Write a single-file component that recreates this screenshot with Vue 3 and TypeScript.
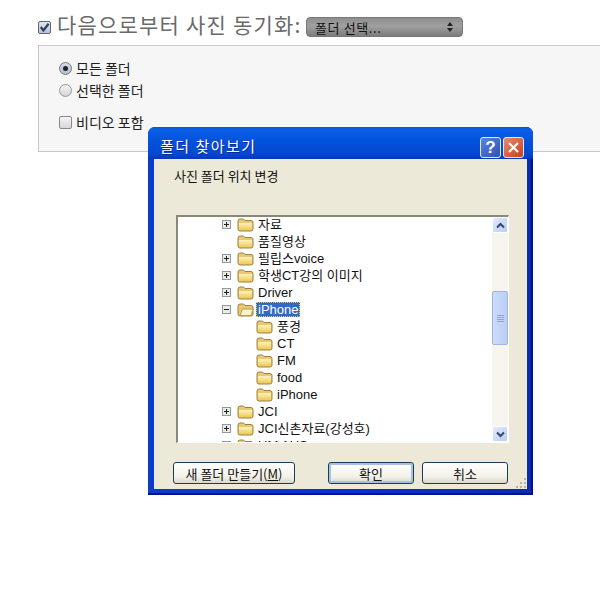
<script setup lang="ts">
interface TreeRow {
  label: string
  depth: number
  expander?: 'plus' | 'minus'
  open?: boolean
}

const rows: TreeRow[] = [
  { label: '자료', depth: 0, expander: 'plus' },
  { label: '품질영상', depth: 0 },
  { label: '필립스voice', depth: 0, expander: 'plus' },
  { label: '학생CT강의 이미지', depth: 0, expander: 'plus' },
  { label: 'Driver', depth: 0, expander: 'plus' },
  { label: 'iPhone', depth: 0, expander: 'minus', open: true },
  { label: '풍경', depth: 1 },
  { label: 'CT', depth: 1 },
  { label: 'FM', depth: 1 },
  { label: 'food', depth: 1 },
  { label: 'iPhone', depth: 1 },
  { label: 'JCI', depth: 0, expander: 'plus' },
  { label: 'JCI신촌자료(강성호)', depth: 0, expander: 'plus' },
  { label: 'HM AUS', depth: 0, expander: 'plus' },
]
</script>

<template>
  <div class="page">
    <header class="sync-head">
      <span class="check checked">
        <svg width="11" height="11" viewBox="0 0 11 11"><path d="M1.8 5 L4.4 8.4 L9.6 1.8" fill="none" stroke="#2f3f5f" stroke-width="2.2" /></svg>
      </span>
      <h1 class="sync-title">다음으로부터 사진 동기화:</h1>
      <div class="select">
        <span>폴더 선택...</span>
        <svg width="8" height="12" viewBox="0 0 8 12"><path d="M4 1 L7 5 H1 Z M4 11 L7 7 H1 Z" fill="#222" /></svg>
      </div>
    </header>

    <section class="panel">
      <label class="opt">
        <span class="radio on"><i></i></span>모든 폴더
      </label>
      <label class="opt">
        <span class="radio"></span>선택한 폴더
      </label>
      <label class="opt video">
        <span class="check"></span>비디오 포함
      </label>
    </section>

    <div class="dialog">
      <div class="titlebar">
        <span class="title-text">폴더 찾아보기</span>
        <span class="cap help">?</span>
        <span class="cap close">
          <svg width="13" height="13" viewBox="0 0 13 13"><path d="M2 2 L11 11 M11 2 L2 11" stroke="#fff" stroke-width="2.2" /></svg>
        </span>
      </div>
      <div class="body">
        <p class="prompt">사진 폴더 위치 변경</p>
        <div class="tree">
          <ul class="rows">
            <li v-for="(r, i) in rows" :key="i" class="row" :class="{ sub: r.depth === 1 }">
              <span v-if="r.depth === 0" class="exp">
                <svg v-if="r.expander" width="9" height="9" viewBox="0 0 9 9">
                  <rect x="0.5" y="0.5" width="8" height="8" fill="#ecebe2" stroke="#8f9aa8" />
                  <path v-if="r.expander === 'plus'" d="M2 4.5 H7 M4.5 2 V7" stroke="#222" />
                  <path v-else d="M2 4.5 H7" stroke="#222" />
                </svg>
              </span>
              <svg class="folder" width="17" height="15" viewBox="0 0 17 15">
                <defs>
                  <linearGradient id="folderFill" x1="0" y1="0" x2="0" y2="1">
                    <stop offset="0" stop-color="#fdf3c0" />
                    <stop offset="1" stop-color="#efca55" />
                  </linearGradient>
                </defs>
                <path d="M1 4 Q1 2 3 2 H6.5 L8 3.5 H14 Q16 3.5 16 5.5 V12 Q16 14 14 14 H3 Q1 14 1 12 Z" fill="#e8c870" stroke="#9c8440" />
                <path v-if="r.open" d="M3 13.5 L5.5 7 H16 L14 13.5 Z" fill="#fdf3c6" stroke="#a89048" stroke-width="0.8" />
                <path v-else d="M2 6 H15 V12.5 Q15 13 14 13 H3 Q2 13 2 12.5 Z" fill="url(#folderFill)" />
              </svg>
              <span class="label" :class="{ selected: r.open }">{{ r.label }}</span>
            </li>
          </ul>
          <div class="scrollbar">
            <span class="sb-btn">
              <svg width="9" height="7" viewBox="0 0 9 7"><path d="M1 5.5 L4.5 2 L8 5.5" fill="none" stroke="#35476f" stroke-width="2" /></svg>
            </span>
            <span class="sb-track">
              <span class="sb-thumb"><i></i><i></i><i></i><i></i></span>
            </span>
            <span class="sb-btn">
              <svg width="9" height="7" viewBox="0 0 9 7"><path d="M1 1.5 L4.5 5 L8 1.5" fill="none" stroke="#35476f" stroke-width="2" /></svg>
            </span>
          </div>
        </div>
        <div class="actions">
          <button class="btn new" type="button">새 폴더 만들기(<u>M</u>)</button>
          <button class="btn ok" type="button">확인</button>
          <button class="btn cancel" type="button">취소</button>
        </div>
        <svg class="grip" width="12" height="12" viewBox="0 0 12 12">
          <path d="M9 1h2v2H9z M5 5h2v2H5z M9 5h2v2H9z M1 9h2v2H1z M5 9h2v2H5z M9 9h2v2H9z" fill="#b8b4a0" />
        </svg>
      </div>
    </div>
  </div>
</template>

<style scoped>
.page {
  position: relative;
  width: 600px;
  height: 601px;
  overflow: hidden;
  background: #fff;
  font-family: "Noto Sans CJK KR", "Liberation Sans", sans-serif;
  color: #222;
}

.sync-head {
  display: flex;
  align-items: center;
  height: 20px;
  padding: 17px 0 0 38px;
}

.check {
  display: block;
  flex: none;
  width: 13px;
  height: 13px;
  box-sizing: border-box;
  border: 1px solid #8a8a8a;
  border-radius: 2px;
  background: linear-gradient(#f4f4f4, #d8d8d8);
}

.check.checked {
  background: linear-gradient(#dfe4f0, #b8c2da);
  border-color: #666;
}

.check svg {
  display: block;
}

.sync-title {
  flex: none;
  width: 249px;
  margin: -6px 0 0 6px;
  font-size: 21px;
  font-weight: 400;
  line-height: 20px;
  color: #6a6a6a;
  white-space: nowrap;
  letter-spacing: 1.2px;
}

.select {
  display: flex;
  align-items: center;
  justify-content: space-between;
  flex: none;
  box-sizing: border-box;
  width: 157px;
  height: 20px;
  padding: 0 8px;
  border: 1px solid #777;
  border-radius: 4px;
  background: linear-gradient(#8e8e8e, #a0a0a0 45%, #7c7c7c);
  font-size: 13px;
  letter-spacing: 0.6px;
  color: #111;
}

.panel {
  display: flex;
  flex-direction: column;
  box-sizing: border-box;
  height: 107px;
  margin: 8px 0 0 38px;
  padding: 11px 0 0 20px;
  border: 1px solid #c9c9c9;
  border-right: 0;
  background: #f6f6f6;
}

.opt {
  display: flex;
  align-items: center;
  gap: 4px;
  height: 22px;
  font-size: 14px;
  color: #222;
}

.opt.video {
  margin-top: 10px;
}

.radio {
  display: flex;
  align-items: center;
  justify-content: center;
  box-sizing: border-box;
  width: 13px;
  height: 13px;
  border: 1px solid #999;
  border-radius: 50%;
  background: linear-gradient(#f6f6f6, #d4d4d4);
}

.radio.on {
  background: linear-gradient(#d5dbe8, #b2bcd2);
  border-color: #777;
}

.radio i {
  width: 5px;
  height: 5px;
  border-radius: 50%;
  background: #222;
}

.dialog {
  position: absolute;
  left: 148px;
  top: 127px;
  display: flex;
  flex-direction: column;
  box-sizing: border-box;
  width: 385px;
  height: 368px;
  border-radius: 7px 7px 0 0;
  background: linear-gradient(90deg, #0a3ec8, #0831d9 50%, #0a2cb0);
  box-shadow: inset 0 -2px 0 #00138c, inset -2px 0 0 #00138c;
}

.titlebar {
  display: flex;
  align-items: flex-start;
  height: 32px;
  flex: none;
  box-sizing: border-box;
  padding: 9px 9px 0 12px;
  border-radius: 7px 7px 0 0;
  background: linear-gradient(#0a58d8 0, #0a5fe8 8%, #0453dd 40%, #0448d0 85%, #0338b8 100%);
}

.title-text {
  flex: 1;
  font-size: 15px;
  line-height: 20px;
  letter-spacing: 1.5px;
  color: #fff;
  text-shadow: 1px 1px 0 #0a2a90;
  white-space: nowrap;
}

.cap {
  display: flex;
  align-items: center;
  justify-content: center;
  box-sizing: border-box;
  width: 21px;
  height: 21px;
  margin-top: 1px;
  border: 1px solid #dfe8fa;
  border-radius: 3px;
}

.help {
  margin-right: 2px;
  background: linear-gradient(135deg, #5c84e0, #2c52b8);
  color: #fff;
  font: 700 17px "Liberation Sans", sans-serif;
}

.close {
  background: linear-gradient(135deg, #e88a6a, #c8401c);
}

.body {
  position: relative;
  flex: 1;
  margin: 0 6px 6px 6px;
  padding: 0 0 0 22px;
  background: #ece9d8;
}

.prompt {
  margin: 0 0 0 -2px;
  padding-top: 8px;
  height: 56px;
  box-sizing: border-box;
  font-size: 13px;
  line-height: 17px;
  color: #111;
}

.tree {
  display: flex;
  box-sizing: border-box;
  width: 333px;
  height: 228px;
  border-top: 2px solid #8a8878;
  border-left: 2px solid #8a8878;
  border-right: 1px solid #fff;
  border-bottom: 1px solid #fff;
  background: #fff;
  overflow: hidden;
}

.rows {
  flex: 1;
  margin: -1px 0 0;
  padding: 0 0 0 44px;
  list-style: none;
  overflow: hidden;
}

.row {
  display: flex;
  align-items: center;
  height: 17px;
  font-family: "Liberation Sans", "Noto Sans CJK KR", sans-serif;
  font-size: 13px;
  color: #111;
  white-space: nowrap;
}

.row.sub {
  padding-left: 34px;
}

.exp {
  display: block;
  width: 15px;
  height: 9px;
  flex: none;
}

.exp svg {
  display: block;
}

.folder {
  flex: none;
}

.label {
  margin-left: 2px;
  padding: 0 2px;
  line-height: 15px;
}

.label.selected {
  background: #316ac5;
  color: #fff;
  outline: 1px dotted #d8c890;
  outline-offset: -1px;
}

.scrollbar {
  display: flex;
  flex-direction: column;
  flex: none;
  width: 16px;
  background: #f6f5ee;
}

.sb-btn {
  display: flex;
  align-items: center;
  justify-content: center;
  flex: none;
  box-sizing: border-box;
  width: 16px;
  height: 16px;
  border: 1px solid #fff;
  border-radius: 2px;
  background: linear-gradient(135deg, #e2ebfd, #b9ccf5);
}

.sb-track {
  flex: 1;
  padding-top: 58px;
}

.sb-thumb {
  display: flex;
  flex-direction: column;
  align-items: center;
  justify-content: center;
  gap: 1px;
  box-sizing: border-box;
  height: 54px;
  border: 1px solid #9fb4e0;
  border-radius: 2px;
  background: linear-gradient(90deg, #cddbf8, #bccef6);
}

.sb-thumb i {
  width: 7px;
  height: 1px;
  background: #8ea5d8;
}

.actions {
  display: flex;
  margin-top: 19px;
}

.btn {
  box-sizing: border-box;
  height: 22px;
  padding: 0;
  border: 1px solid #1c3d5a;
  border-radius: 3px;
  background: linear-gradient(#fff, #f2f1e8 70%, #dcd8c8);
  font: 13px "Noto Sans CJK KR", "Liberation Sans", sans-serif;
  color: #111;
}

.btn.new {
  width: 122px;
  margin-left: -3px;
}

.btn.ok {
  width: 86px;
  margin-left: 33px;
  box-shadow: inset 0 0 0 2px #a8c0e8;
}

.btn.cancel {
  width: 86px;
  margin-left: 8px;
}

.grip {
  position: absolute;
  right: 0;
  bottom: 0;
}
</style>

<style>
html, body {
  margin: 0;
  background: #fff;
}
</style>
